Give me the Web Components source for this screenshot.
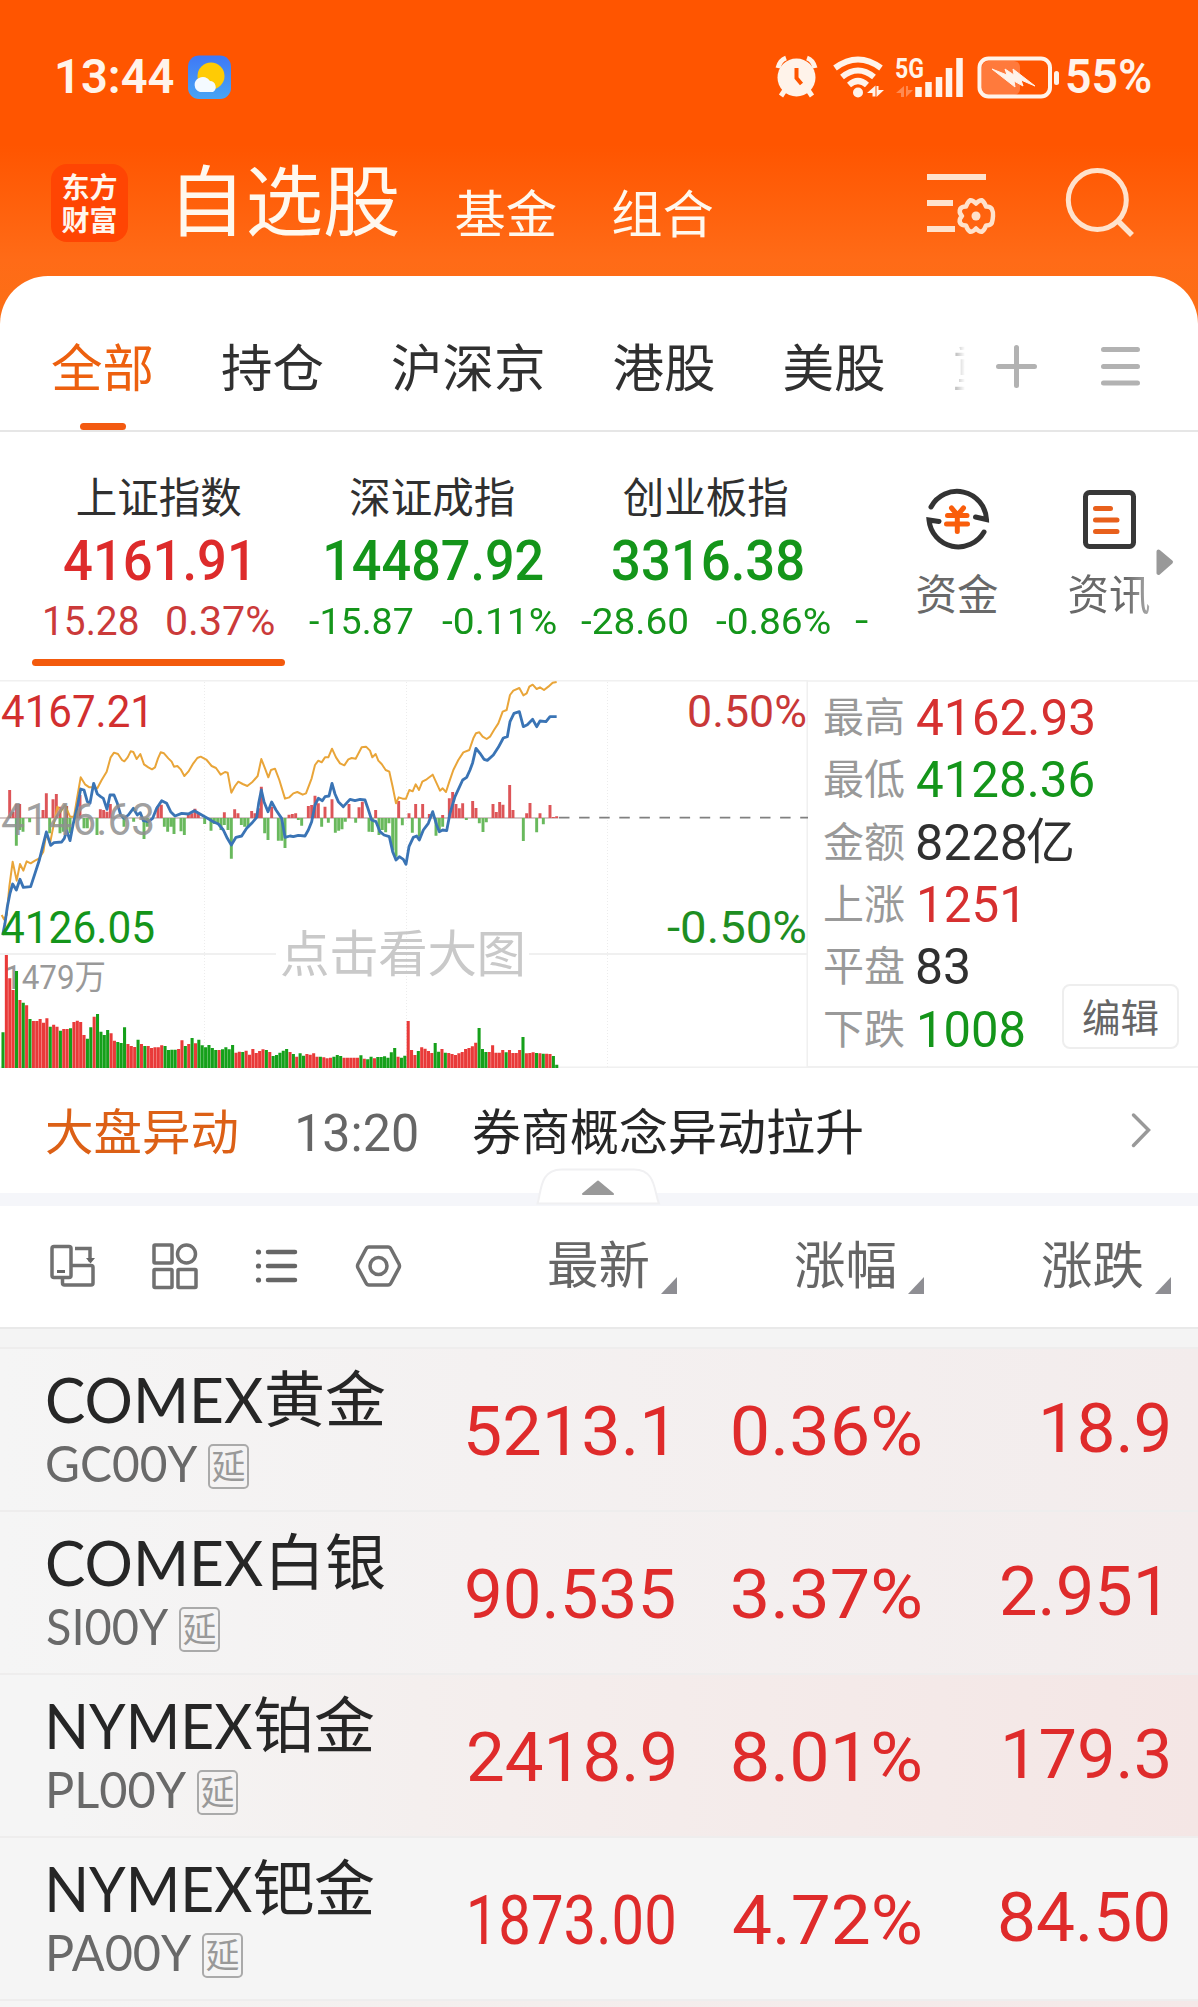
<!DOCTYPE html>
<html lang="zh-CN">
<head>
<meta charset="utf-8">
<title>自选股</title>
<style>
html,body{margin:0;padding:0}
body{width:1198px;height:2007px;overflow:hidden;background:#f4f4f4;font-family:Roboto,"Noto Sans CJK SC",sans-serif;color:#333}
</style>
</head>
<body>
<stock-app></stock-app>
<script>
const make = (css, html) => {
  const t = document.createElement('template');
  t.innerHTML = `<style>:host{display:block;box-sizing:border-box}*{box-sizing:border-box}svg{display:block;flex:none;overflow:visible}${css}</style>${html}`;
  return t;
};
const define = (name, css, html, after) => customElements.define(name, class extends HTMLElement {
  connectedCallback() {
    if (this.shadowRoot) return;
    const root = this.attachShadow({ mode: 'open' });
    root.append(make(css, typeof html === 'function' ? html(this) : html).content.cloneNode(true));
    if (after) after(this, root);
  }
});
const icon = (x, y, w, h, body, attrs = '') => `<svg width="${w}" height="${h}" viewBox="${x} ${y} ${w} ${h}" fill="none" ${attrs}>${body}</svg>`;

/* Text whose ink is set to a given width */
const ctx = document.createElement('canvas').getContext('2d');
define('fit-text', ':host{display:inline-block;white-space:nowrap;flex:none}span{display:inline-block;transform-origin:0 50%}', '<span><slot></slot></span>', (el, root) => {
  const cs = getComputedStyle(el), w = +el.getAttribute('w');
  ctx.font = `${cs.fontWeight} ${cs.fontSize} ${cs.fontFamily}`;
  const m = ctx.measureText(el.textContent.trim());
  const s = w / (m.actualBoundingBoxLeft + m.actualBoundingBoxRight);
  el.style.width = w + 'px';
  root.querySelector('span').style.transform = `translateX(${m.actualBoundingBoxLeft * s}px) scaleX(${s})`;
});

define('status-bar', `:host{display:flex;flex:none;align-items:center;height:64px;margin-top:45px;padding:0 47px 0 57px;color:#fff3ea;font-size:48px;font-weight:600;line-height:64px}
.sp{flex:1}.w{margin-left:14px}.wifi{margin-left:15px}.sig{margin-left:10px}.bat{margin:0 8px 0 15px}`, `
<fit-text w="117">13:44</fit-text>
${icon(188,55,43,44,`<defs><linearGradient id="a" x2="0" y2="1"><stop stop-color="#3f78f6"/><stop offset="1" stop-color="#47a4f5"/></linearGradient></defs><rect x="188" y="55.500" width="43" height="43.500" rx="11" fill="url(#a)"/><circle cx="211" cy="76" r="13.500" fill="#ffcb05"/><path d="M200 92a7.500 7.500 0 0 1-1-14 8 8 0 0 1 11 3 6 6 0 0 1 3 11z" fill="#f4faff"/>`,'class="w"')}
<span class="sp"></span>
${icon(775,57,43,42,`<circle cx="796.500" cy="78.500" r="19" fill="#fff3ea"/><path d="M778 69q2-8 8-10M815 69q-2-8-8-10M785 91l-4 6M808 91l4 6" stroke="#fff3ea" stroke-width="5"/><path d="M796.500 69v10l5 6" stroke="#ff5500" stroke-width="4"/>`)}
${icon(832,55,53,42,`<g stroke="#fff3ea" stroke-width="6"><path d="M834 67q23-17 46 0M841 76q16-13 32 0M848 84q9-8 18 0"/></g><circle cx="857" cy="91.500" r="5" fill="#fff3ea"/><path d="M866 92h5.500v3.500h3v-11zM883 89h-5.500v-4h-2v11z" fill="#fff3ea"/>`,'class="wifi"')}
${icon(895,55,67,42,`<text x="894" y="76.500" font-size="27" font-weight="700" fill="#fff3ea" textLength="29" lengthAdjust="spacingAndGlyphs">5G</text><path d="M895 92h5v4h3v-11zM912 89h-5v-4h-2v11z" fill="#ff8a50"/><path d="M917.500 86v10M927.500 81v15M938 76v20M948 67v29M958.500 57v39" stroke="#fff3ea" stroke-width="6.500"/>`,'class="sig"')}
${icon(978,54,81,43,`<rect x="982" y="59" width="38" height="34" rx="6" fill="#ff7a3c"/><rect x="979.500" y="56.500" width="70.500" height="38" rx="9" stroke="#fff3ea" stroke-width="4"/><rect x="1054" y="69" width="5" height="14" rx="2.500" fill="#fff3ea"/><path d="M992 67l15 6-2-6 9 6-1-6 22 17-14-6 2 6-9-5 1 6z" fill="#fff3ea" stroke="#fff3ea"/>`,'class="bat"')}
<fit-text w="84">55%</fit-text>`);

define('brand-logo', `:host{width:77px;height:78px;border-radius:16px;background:#ff4503;color:#fff6ee;display:flex;flex-direction:column;align-items:center;justify-content:center;font:700 28px/33px "Noto Sans CJK SC",sans-serif}`, `<span>东方</span><span>财富</span>`);

define('app-header', `:host{display:flex;flex:none;align-items:center;height:167px;padding:21px 64px 0 51px;color:#fff8ee;font-size:51.300px;line-height:60px}
h1{margin:1px 0 0 40px;font-size:77.500px;font-weight:400;line-height:90px}.t{margin:26px 0 0 54px}.sp{flex:1}.s{margin-left:72px}`, `
<brand-logo></brand-logo><h1>自选股</h1><span class="t">基金</span><span class="t">组合</span><span class="sp"></span>
${icon(927,164,68,78,`<g stroke="#ffe2cc" stroke-width="6"><path d="M927 177h59M927 203h26M927 229h28"/></g><path d="M993.000 216.000Q992.800 219.900 991.800 223.100Q990.000 225.500 986.000 225.500Q984.500 230.000 982.000 231.700Q979.500 232.200 976.000 228.500Q972.500 232.200 970.000 231.700Q967.500 230.000 966.000 225.500Q962.000 225.500 960.200 223.100Q958.500 219.500 962.000 216.000Q958.500 212.500 960.200 208.900Q962.000 206.500 966.000 206.500Q967.500 202.000 970.000 200.300Q972.500 199.800 976.000 203.500Q979.500 199.800 982.000 200.300Q984.500 202.000 986.000 206.500Q990.000 206.500 991.800 208.900Q993.500 212.500 993.000 216.000z" stroke="#ffe2cc" stroke-width="4.500" stroke-linejoin="round"/><circle cx="976" cy="216" r="4.500" fill="#ffe2cc"/>`)}
${icon(1067,164,67,78,`<ellipse cx="1097.300" cy="200" rx="29" ry="29.500" stroke="#ffe2cc" stroke-width="5"/><path d="M1118 221l14 14" stroke="#ffe2cc" stroke-width="5.500"/>`,'class="s"')}`);

define('market-tabs', `:host{display:flex;height:156px;border-bottom:2px solid #e6e6e6;padding-left:51px;font-size:51.500px;line-height:60px;color:#303030}
.t{display:flex;flex-direction:column;align-items:center;justify-content:space-between;padding-top:64px;margin-right:67px;flex:none}.on{color:#ed600f}.on:after{content:"";width:46px;height:7px;border-radius:4px;background:#f35a11}
.cut{width:12px;overflow:hidden;margin-right:31px;-webkit-mask:linear-gradient(90deg,#0006,#0000);mask:linear-gradient(90deg,#0006,#0000);align-items:flex-start}
svg{margin-top:68px}.m{margin-left:64px}`, `
<span class="t on">全部</span><span class="t">持仓</span><span class="t">沪深京</span><span class="t">港股</span><span class="t">美股</span><span class="t cut">重</span>
${icon(996,344,41,46,`<path d="M998.500 366.500h36M1016.500 347.500v38" stroke="#b2b2b2" stroke-width="5" stroke-linecap="round"/>`)}
${icon(1101,344,39,46,`<path d="M1103.500 349.500h34M1103.500 366.500h34M1103.500 383h34" stroke="#b2b2b2" stroke-width="5" stroke-linecap="round"/>`,'class="m"')}`);

define('index-card', `:host{display:flex;flex-direction:column;align-items:center;width:273.500px;flex:none;color:#303030}
.n{margin-top:42px;font-size:41.500px;line-height:50px}.v{margin-top:7px;font-size:55px;font-weight:500;line-height:60px}
.s{display:flex;gap:29px;margin-top:8px;height:44px;line-height:45px;font-size:37px}.up{color:#dd2b2b}.down{color:#14951a}.s.up{font-size:40px;color:#cb3a3a;padding-left:2px}
.bar{width:253px;height:7px;border-radius:4px;background:#f35a0d;margin-top:16px}`, el => {
  const [n, v, vw, a, aw, b, bw, dir, shift, on] = el.getAttribute('data').split(',');
  return `<span class="n">${n}</span><span class="v ${dir}" style="margin-left:${shift}px"><fit-text w="${vw}">${v}</fit-text></span><span class="s ${dir}"><fit-text w="${aw}">${a}</fit-text><fit-text w="${bw}">${b}</fit-text></span>${on ? '<i class="bar"></i>' : ''}`;
});

define('quick-entry', `:host{display:flex;flex-direction:column;align-items:center;width:84px;flex:none;font-size:41.500px;line-height:50px;color:#696969}span{margin-top:19px}
:host([fade]) span{-webkit-mask:linear-gradient(90deg,#000 70%,#0008);mask:linear-gradient(90deg,#000 70%,#0008)}`, `<slot name="icon"></slot><span><slot></slot></span>`);

define('index-strip', `:host{display:flex;height:248px;padding-left:22px;background:#fff;overflow:hidden}
.next{width:14px;margin:167px 46px 0 12.500px;color:#14951a;font-size:37px;line-height:44px}.e2{margin-left:68px}quick-entry{margin-top:54px}.tri{margin:115px 0 0 5px}`, `
<index-card data="上证指数,4161.91,183,15.28,93,0.37%,107,up,-7,1"></index-card>
<index-card data="深证成指,14487.92,217,-15.87,104,-0.11%,114,down,5"></index-card>
<index-card data="创业板指,3316.38,190,-28.60,106,-0.86%,114,down,4"></index-card>
<span class="next"><fit-text w="13">-</fit-text></span>
<quick-entry>${icon(925,486,64,66,`<g stroke="#333" stroke-width="5"><path d="M931 507a29.500 29.500 0 0 1 55.500 12.500l-11-2.500" stroke-linecap="round"/><path d="M984 532a29.500 29.500 0 0 1-55-12l10 1.500" stroke-linecap="round"/></g><path d="M951.500 508l6 7 6-7M947.500 515.500h19.500M946.500 524h21M957.300 515v16.500" stroke="#f95d0b" stroke-width="5" stroke-linecap="round"/>`,'slot="icon"')}资金</quick-entry>
<quick-entry class="e2" fade>${icon(1083,486,53,66,`<rect x="1085.500" y="492.500" width="48" height="54" rx="4" stroke="#383838" stroke-width="5"/><path d="M1095.500 508.500h15M1095.500 520h21.500M1095.500 531.500h21.500" stroke="#e8601c" stroke-width="5" stroke-linecap="round"/>`,'slot="icon"')}资讯</quick-entry>
${icon(1156,547,17,30,`<path d="M1158.500 551.500l12.500 10.500-12.500 11z" fill="#999" stroke="#999" stroke-width="4" stroke-linejoin="round"/>`,'class="tri"')}`);

/* Chart series; coordinates are thirds of a pixel */
const avg = '5,735 12,748 20,735 28,650 38,575 50,632 60,582 70,602 80,574 92,580 105,572 118,565 130,545 139,490 150,520 160,470 172,410 182,425 195,405 210,440 222,440 232,380 242,322 255,343 268,352 280,352 292,355 305,330 320,305 332,262 342,248 354,252 366,270 373,274 383,262 392,244 400,246 410,267 421,252 432,283 445,292 456,298 465,292 474,265 482,247 492,250 505,265 515,275 522,290 532,288 542,298 553,318 565,305 580,280 592,264 602,260 620,270 635,288 648,294 662,314 675,306 683,308 694,368 705,348 715,335 728,342 742,348 758,335 773,318 784,267 795,295 805,322 813,300 825,296 838,330 855,386 868,382 880,370 892,366 908,374 918,370 935,325 945,285 955,272 965,277 975,262 985,262 996,236 1008,262 1020,280 1033,286 1045,268 1055,264 1067,266 1085,232 1098,230 1110,242 1117,262 1127,252 1135,272 1145,282 1157,300 1168,305 1178,350 1188,400 1196,382 1208,386 1218,386 1228,360 1238,364 1247,343 1257,360 1267,335 1280,328 1298,314 1310,340 1320,362 1328,355 1338,366 1348,335 1360,300 1375,270 1390,247 1408,240 1420,205 1428,190 1438,187 1448,200 1460,207 1470,200 1482,180 1495,160 1508,125 1520,120 1530,75 1540,62 1558,54 1570,76 1580,70 1588,50 1598,44 1610,57 1620,52 1632,60 1645,50 1658,38 1670,36';
const price = '8,795 15,760 22,710 30,670 38,642 49,660 60,628 70,652 92,650 105,610 118,570 128,530 139,486 152,526 162,518 185,516 193,505 200,482 210,512 220,460 232,410 242,357 252,360 262,395 270,400 281,340 292,372 302,380 310,385 321,418 330,375 342,375 352,400 362,435 372,445 385,435 400,415 412,435 421,428 430,452 445,455 458,445 470,415 485,392 500,400 512,425 525,438 545,430 565,432 583,422 600,432 625,446 640,455 655,462 670,480 682,505 694,525 708,502 725,498 740,475 755,460 770,442 776,400 784,360 792,395 804,425 815,396 828,420 845,445 855,502 870,498 880,500 895,496 915,498 925,480 935,455 945,405 955,385 967,392 975,380 987,378 996,340 1005,372 1015,395 1030,410 1050,388 1065,392 1080,388 1095,390 1102,410 1115,450 1128,455 1140,485 1152,495 1168,500 1178,545 1188,570 1198,560 1210,568 1218,583 1227,530 1240,502 1250,498 1258,510 1270,480 1285,460 1298,425 1310,465 1318,485 1328,480 1340,482 1350,430 1365,380 1388,330 1400,322 1410,300 1418,278 1428,235 1440,250 1452,268 1462,271 1480,255 1495,232 1510,204 1522,200 1530,155 1542,130 1558,125 1570,170 1582,164 1598,148 1610,170 1620,153 1638,155 1650,140 1670,140';
const ups = '29:360 39:425 49:402 59:402 129:420 139:370 159:388 169:372 180:410 200:408 230:415 240:375 301:418 311:420 321:425 331:402 474:408 484:404 565:432 575:430 585:416 595:430 673:427 704:418 714:430 755:423 765:430 775:415 784:350 815:410 867:434 877:432 887:430 925:408 935:405 945:377 955:400 975:410 996:388 1047:402 1077:412 1087:395 1127:420 1196:393 1227:430 1247:402 1268:402 1288:432 1328:435 1348:385 1358:366 1368:402 1378:415 1388:400 1418:393 1428:414 1479:402 1489:426 1499:396 1509:404 1529:345 1539:420 1580:430 1590:399 1620:430 1650:405 1660:441 1670:439';
const downs = '49:527 59:480 69:485 89:457 149:490 180:490 190:485 200:480 210:490 252:475 262:475 291:495 372:470 401:455 432:507 442:470 493:470 503:485 513:470 522:492 543:484 553:495 614:462 633:482 643:462 653:462 663:480 673:465 684:480 694:566 724:465 734:470 744:472 794:490 804:510 835:512 845:512 855:534 895:450 905:467 965:470 985:458 1006:488 1016:482 1026:478 1036:455 1067:458 1107:485 1117:486 1137:495 1147:480 1157:487 1167:460 1178:540 1188:560 1207:466 1237:488 1258:500 1308:497 1318:480 1328:470 1399:450 1438:460 1449:486 1459:457 1570:513 1610:487 1630:463';
const vols = 'g1087 r855 r925 r960 g903 r990 g998 r1006 g1047 r1053 r1053 r1047 r1058 r1045 g1070 r1064 r1070 g1082 r1077 r1077 g1075 r1056 r1052 r1056 r1095 g1106 g1072 r1040 g1032 g1085 g1095 g1080 r1090 r1112 g1116 g1119 g1072 r1122 r1128 r1131 g1109 r1122 g1128 r1128 r1134 r1132 r1132 r1126 g1128 g1140 g1139 g1139 r1137 r1111 g1128 r1122 g1104 r1120 g1109 g1126 g1132 g1125 g1134 g1140 r1140 g1138 g1132 g1138 g1125 r1148 r1145 g1146 r1142 r1154 r1137 r1149 r1143 r1138 g1140 r1146 g1158 g1155 g1148 g1142 g1137 r1146 g1152 r1160 g1150 g1157 r1152 r1154 r1150 r1160 g1160 r1162 r1165 r1163 g1160 g1155 g1158 r1163 r1163 r1163 r1163 r1163 g1156 r1166 g1168 g1160 r1165 g1161 g1161 g1159 g1163 g1147 g1134 r1160 g1163 g1157 r1053 r1140 r1155 g1143 r1132 r1136 r1143 r1149 g1119 g1145 r1137 g1148 r1149 r1152 r1155 r1150 r1146 r1137 r1134 r1129 r1118 g1074 g1137 g1146 r1146 r1126 r1148 r1148 r1140 g1147 r1140 r1149 r1149 r1140 g1101 r1150 r1149 r1147 g1149 r1150 g1151 r1151 r1152 g1158 g1184';
const barPath = list => list.split(' ').map(p => { const [x, y] = p.split(':'); return `M${x} 444V${y}`; }).join('');
const volPath = c => vols.split(' ').map((p, i) => p[0] === c ? `M${(9 + i * 10.13).toFixed(1)} 1194V${p.slice(1)}` : '').join('');

define('trend-chart', `:host{width:808px;height:388px;overflow:hidden;flex:none}text{font-family:Roboto,"Noto Sans CJK SC",sans-serif}`, `
<svg width="808" height="388" viewBox="0 680 808 388" fill="none">
<path d="M0 680.500h808M0 954h276M529 954h279M0 1067.500h808M807.500 680v388" stroke="#f0f0f0" stroke-width="2"/>
<path d="M204.500 682v385M406.500 682v385M607.500 682v385" stroke="#ececec" stroke-dasharray="1 2"/>
<path d="M559 817.700h249" stroke="#808080" stroke-width="1.800" stroke-dasharray="10.500 9.600"/>
<text x="280" y="972" font-size="49.500" textLength="246" fill="#c9c9c9">点击看大图</text>
<text x="4" y="988.500" font-size="34" fill="#999" textLength="102" lengthAdjust="spacingAndGlyphs">1479万</text>
<g transform="translate(0 670) scale(.33333)">
<path d="M0 444H1675" stroke="#a99090" stroke-width="3"/>
<g stroke-width="8.800"><path d="${barPath(ups)}" stroke="#dd5558"/><path d="${barPath(downs)}" stroke="#69b95d"/></g>
<g stroke-width="9.200"><path d="${volPath('r')}" stroke="#e93a39"/><path d="${volPath('g')}" stroke="#15a01a"/></g>
<polyline points="${avg}" stroke="#e9a539" stroke-width="6" stroke-linejoin="round"/>
<polyline points="${price}" stroke="#3a74b5" stroke-width="8.500" stroke-linejoin="round"/></g>
<g font-size="43.500">
<text x="1" y="726.500" fill="#d22f2f" textLength="153" lengthAdjust="spacingAndGlyphs">4167.21</text>
<text x="1" y="834.500" fill="#8f8f8f" fill-opacity=".85" textLength="154" lengthAdjust="spacingAndGlyphs">4146.63</text>
<text x="1" y="942.500" fill="#14951a" textLength="154" lengthAdjust="spacingAndGlyphs">4126.05</text>
<text x="687" y="726.500" fill="#c93838" textLength="120" lengthAdjust="spacingAndGlyphs">0.50%</text>
<text x="667" y="942.500" fill="#1e8e22" textLength="140" lengthAdjust="spacingAndGlyphs">-0.50%</text></g>
</svg>`);

define('stat-line', `:host{display:flex;align-items:center;height:62.300px;line-height:60px}.k{width:94px;color:#999;font-size:41px}.v{display:flex;font-size:50px;color:#303030}.up{color:#d63030}.down{color:#14951a}.cn{font-size:49px}`, el => {
  const [k, v, w, dir, unit, o] = el.getAttribute('data').split(',');
  return `<span class="k">${k}</span><span class="v ${dir}" style="margin-left:${o || 0}px"><fit-text w="${w}">${v}</fit-text>${unit ? `<span class="cn">${unit}</span>` : ''}</span>`;
});

define('market-stats', `:host{display:flex;width:390px;padding:5px 19px 0 15px;border-top:2px solid #f3f3f3;border-bottom:2px solid #f0f0f0}.l{flex:1}
button{align-self:flex-end;width:117px;height:65px;margin:0 0 17px -100px;border:2px solid #eee;border-radius:8px;background:#fff;color:#666;font:400 38.500px/60px Roboto,"Noto Sans CJK SC",sans-serif;padding:3px 0 0}`, `
<div class="l"><stat-line data="最高,4162.93,176,up"></stat-line><stat-line data="最低,4128.36,176,down"></stat-line><stat-line data="金额,8228,109,flat,亿"></stat-line><stat-line data="上涨,1251,97,up,,3"></stat-line><stat-line data="平盘,83,51,flat"></stat-line><stat-line data="下跌,1008,104,down,,3"></stat-line></div><button>编辑</button>`);

define('news-row', `:host{display:flex;align-items:center;height:125px;padding:6px 47px 0 45px;font-size:49px;line-height:60px;background:#fff}
b{font-weight:400;font-size:48.500px;color:#dc6016}.t{margin:0 55px 0 59px;color:#666;font-size:52px}.h{color:#262626;flex:1}svg{margin-bottom:9px}`, `
<b>大盘异动</b><fit-text class="t" w="119">13:20</fit-text><span class="h">券商概念异动拉升</span>
${icon(1131,1110,20,40,`<path d="M1133.500 1116l15 15-15 15.500" stroke="#999" stroke-width="3.500" stroke-linecap="round"/>`)}`);

define('fold-handle', `:host{display:flex;justify-content:center;height:13px;background:#f5f6fa;padding-right:2px}svg{margin-top:-25px;z-index:1}`, icon(537,1168,122,37,`<path d="M537.500 1203.500c4-12 2-34 24-34h72.500c22 0 20 22 25 34z" fill="#fff" stroke="#f0f0f2" stroke-width="2"/><path d="M598 1181.500l15 12.500h-30z" fill="#999" stroke="#999" stroke-width="2" stroke-linejoin="round"/>`));

define('list-toolbar', `:host{display:flex;align-items:center;height:123px;background:#fff;border-bottom:2px solid #e9e9e9;padding:1px 26px 0 50px;font-size:51.500px;line-height:60px;color:#666}
.a{margin-right:56px}.b{margin-right:58px}.c{margin-right:58px}.d{margin-right:146px}.h{display:flex;align-items:flex-end;gap:11px;margin-right:117px;flex:none}.h:last-child{margin-right:0}.h svg{margin-bottom:3px}`, () => {
  const g = 'stroke="#707070" stroke-width="3.500"';
  const tri = icon(0,0,16,17,'<path d="M16 0v17H0z" fill="#8e8e93"/>');
  return `${icon(50,1244,46,48,`<g ${g}><rect x="52" y="1247.500" width="19" height="31" rx="2"/><path d="M62.500 1279v5q0 2 2 2h26.500q2 0 2-2v-15.500q0-2-2-2H72M75 1249.500h15v13" /></g><path d="M86 1259h9l-4.500 5.500zM57 1271h8v3h-8z" fill="#666"/>`,'class="a"')}
${icon(152,1244,45,48,`<g ${g}><rect x="154" y="1246" width="18" height="18" rx="1"/><ellipse cx="186.500" cy="1255" rx="9" ry="9"/><rect x="154" y="1270.500" width="18" height="18" rx="1"/><rect x="178" y="1270.500" width="18" height="18" rx="1"/></g>`,'class="b"')}
${icon(255,1244,43,48,`<path d="M268 1253h27M268 1267h27M268 1281h27" stroke="#666" stroke-width="4.500" stroke-linecap="round"/><g fill="#666"><circle cx="258.500" cy="1253" r="2.600"/><circle cx="258.500" cy="1267" r="2.600"/><circle cx="258.500" cy="1281" r="2.600"/></g>`,'class="c"')}
${icon(356,1244,45,48,`<g ${g}><path d="M369 1248h19q2 0 3 2l8 15q1 2 0 4l-8 15q-1 2-3 2h-19q-2 0-3-2l-8-15q-1-2 0-4l8-15q1-2 3-2z"/><circle cx="378.500" cy="1267" r="8.500"/></g>`,'class="d"')}
<span class="h">最新${tri}</span><span class="h">涨幅${tri}</span><span class="h">涨跌${tri}</span>`;
});

define('quote-row', `:host{display:flex;height:163px;border-top:2px solid #eeeded;background:var(--bg,#f5f5f5);padding:0 29px 0 47px}
.id{width:420px;padding-top:19.500px;flex:none}.n{display:flex;height:60px;line-height:60px;font-size:62px;color:#262626;font-family:Lato,"Noto Sans CJK SC",sans-serif}.cn{font-size:61px;margin-left:1px}
.c{display:flex;gap:10px;margin-top:9.500px;line-height:50px;font-size:50px;color:#696969;font-family:Lato,sans-serif}.b{width:41px;height:45px;margin-top:6px;border:2px solid #aaa;border-radius:5px;color:#999;text-align:center;font:400 34px/43px Roboto,"Noto Sans CJK SC",sans-serif}
.v{color:#df2b2b;font-size:68px;line-height:80px}.p{width:266px;padding-top:43px}.q{padding-top:43px;flex:1}.r{padding-top:40px}`, el => {
  const [l, lw, cn, code, cw, p, pw, po, q, r, rw, ro, lo] = el.getAttribute('data').split(',');
  return `<div class="id"><div class="n"><fit-text w="${lw}" style="margin-left:${lo}px">${l}</fit-text><span class="cn">${cn}</span></div><div class="c"><fit-text w="${cw}" style="margin-left:${lo}px">${code}</fit-text><span class="b">延</span></div></div>
<div class="v p"><fit-text w="${pw}" style="margin-left:${po}px">${p}</fit-text></div><div class="v q"><fit-text w="187">${q}</fit-text></div><div class="v r"><fit-text w="${rw}" style="margin-right:${ro}px">${r}</fit-text></div>`;
});

define('stock-app', `:host{width:1198px;height:2007px;background:linear-gradient(#ff5500 0,#ff5500 145px,#ff6b17 260px,#fb7015 330px);overflow:hidden;display:flex;flex-direction:column}
main{background:#fff;border-radius:48px 48px 0 0;flex:none}.mid{display:flex;height:388px}.list{background:#f4f4f4;padding-top:18px}
.k1{--bg:linear-gradient(90deg,#f5f5f5,#f4f1f1 40%,#f3ecec)}.k2{--bg:linear-gradient(90deg,#f5f5f5 5%,#f4efee 35%,#f4e6e5)}.more{height:8px;border-top:2px solid #eeeded;background:linear-gradient(90deg,#f5f5f5 5%,#f4efee 35%,#f5e8e8)}`, `
<status-bar></status-bar><app-header></app-header>
<main><market-tabs></market-tabs><index-strip></index-strip>
<div class="mid"><trend-chart></trend-chart><market-stats></market-stats></div>
<news-row></news-row><fold-handle></fold-handle><list-toolbar></list-toolbar>
<div class="list">
<quote-row class="k1" data="COMEX,216,黄金,GC00Y,151,5213.1,197,1,0.36%,18.9,125,1,0"></quote-row>
<quote-row class="k1" data="COMEX,216,白银,SI00Y,122,90.535,207,0,3.37%,2.951,156,11,0"></quote-row>
<quote-row class="k2" data="NYMEX,203,铂金,PL00Y,138,2418.9,205,2,8.01%,179.3,163,1,2"></quote-row>
<quote-row data="NYMEX,203,钯金,PA00Y,143,1873.00,204,3,4.72%,84.50,168,1,2"></quote-row>
<div class="more"></div>
</div></main>`);
</script>
</body>
</html>
